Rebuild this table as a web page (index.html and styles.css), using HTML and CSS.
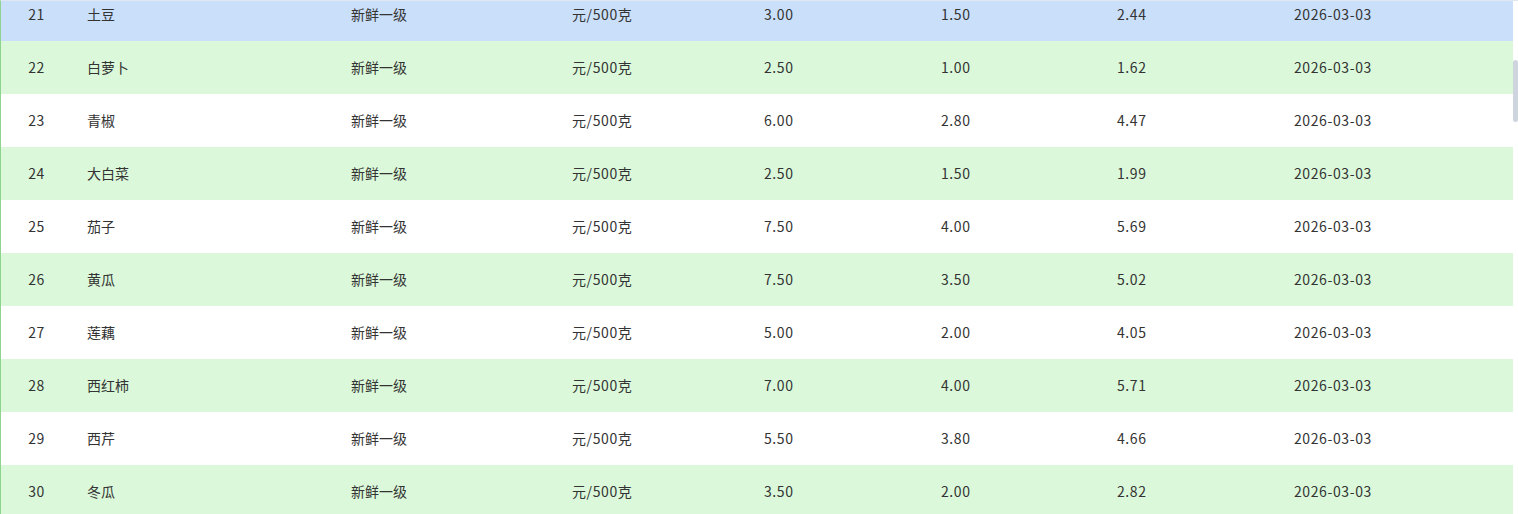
FILE: index.html
```html
<!DOCTYPE html>
<html lang="zh">
<head>
<meta charset="utf-8">
<title>价格表</title>
<link rel="stylesheet" href="styles.css">
</head>
<body>
<div class="viewport">
  <div class="table">
    <div class="row sel"><span class="c idx n">21</span><span class="c">土豆</span><span class="c">新鲜一级</span><span class="c n">元/500克</span><span class="c n">3.00</span><span class="c n">1.50</span><span class="c n">2.44</span><span class="c n">2026-03-03</span></div>
    <div class="row alt"><span class="c idx n">22</span><span class="c">白萝卜</span><span class="c">新鲜一级</span><span class="c n">元/500克</span><span class="c n">2.50</span><span class="c n">1.00</span><span class="c n">1.62</span><span class="c n">2026-03-03</span></div>
    <div class="row"><span class="c idx n">23</span><span class="c">青椒</span><span class="c">新鲜一级</span><span class="c n">元/500克</span><span class="c n">6.00</span><span class="c n">2.80</span><span class="c n">4.47</span><span class="c n">2026-03-03</span></div>
    <div class="row alt"><span class="c idx n">24</span><span class="c">大白菜</span><span class="c">新鲜一级</span><span class="c n">元/500克</span><span class="c n">2.50</span><span class="c n">1.50</span><span class="c n">1.99</span><span class="c n">2026-03-03</span></div>
    <div class="row"><span class="c idx n">25</span><span class="c">茄子</span><span class="c">新鲜一级</span><span class="c n">元/500克</span><span class="c n">7.50</span><span class="c n">4.00</span><span class="c n">5.69</span><span class="c n">2026-03-03</span></div>
    <div class="row alt"><span class="c idx n">26</span><span class="c">黄瓜</span><span class="c">新鲜一级</span><span class="c n">元/500克</span><span class="c n">7.50</span><span class="c n">3.50</span><span class="c n">5.02</span><span class="c n">2026-03-03</span></div>
    <div class="row"><span class="c idx n">27</span><span class="c">莲藕</span><span class="c">新鲜一级</span><span class="c n">元/500克</span><span class="c n">5.00</span><span class="c n">2.00</span><span class="c n">4.05</span><span class="c n">2026-03-03</span></div>
    <div class="row alt"><span class="c idx n">28</span><span class="c">西红柿</span><span class="c">新鲜一级</span><span class="c n">元/500克</span><span class="c n">7.00</span><span class="c n">4.00</span><span class="c n">5.71</span><span class="c n">2026-03-03</span></div>
    <div class="row"><span class="c idx n">29</span><span class="c">西芹</span><span class="c">新鲜一级</span><span class="c n">元/500克</span><span class="c n">5.50</span><span class="c n">3.80</span><span class="c n">4.66</span><span class="c n">2026-03-03</span></div>
    <div class="row alt"><span class="c idx n">30</span><span class="c">冬瓜</span><span class="c">新鲜一级</span><span class="c n">元/500克</span><span class="c n">3.50</span><span class="c n">2.00</span><span class="c n">2.82</span><span class="c n">2026-03-03</span></div>
  </div>
  <div class="thumb"></div>
</div>
</body>
</html>
```

FILE: styles.css
```css
html, body {
  margin: 0;
  padding: 0;
  background: #fff;
}
body {
  font-family: "Microsoft YaHei", "Noto Sans CJK SC", sans-serif;
  font-size: 14px;
  color: #333;
}
.viewport {
  position: relative;
  width: 1517px;
  height: 513px;
  overflow: hidden;
  border-top: 1px solid #dfe7f1;
  border-left: 1px solid #8ed48e;
}
.table {
  width: 1512px;
  margin-top: -13px;
}
.row {
  display: grid;
  grid-template-columns: 71px 264px 221px 192px 177px 176px 177px 234px;
  height: 53px;
  box-sizing: border-box;
  padding-bottom: 2px;
  align-items: center;
  background: #fff;
}
.row.alt { background: #dbf9da; }
.row.sel { background: #cadff9; }
.c {
  padding-left: 15px;
  white-space: nowrap;
}
.c.n {
  letter-spacing: 0.6px;
}
.c.idx {
  padding-left: 0;
  text-align: center;
}
.thumb {
  position: absolute;
  right: 0;
  top: 59px;
  width: 5px;
  height: 62px;
  border-radius: 3px;
  background: #cfd5de;
}
```
